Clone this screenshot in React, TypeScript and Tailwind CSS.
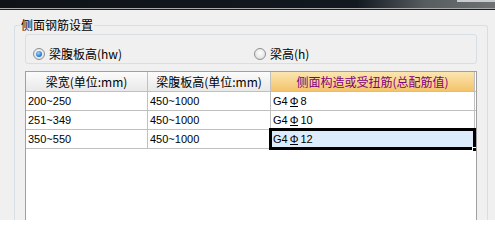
import React from "react";

type Row = { width: string; web: string; bar: number };

const rows: Row[] = [
  { width: "200~250", web: "450~1000", bar: 8 },
  { width: "251~349", web: "450~1000", bar: 10 },
  { width: "350~550", web: "450~1000", bar: 12 },
];

const cjk = { fontFamily: '"Noto Sans CJK SC", "Noto Sans", sans-serif' };
const latin = { fontFamily: '"Liberation Sans", Arial, sans-serif' };

const Radio = ({ checked, label }: { checked?: boolean; label: string }) => (
  <label className="flex items-center gap-[4px] h-[12px]">
    <span className="w-[12px] h-[12px] rounded-full border border-[#8e8f8f] bg-[radial-gradient(circle_at_50%_40%,#ffffff,#d8d8d8)] flex items-center justify-center">
      {checked && (
        <span className="w-[6px] h-[6px] rounded-full bg-[radial-gradient(circle_at_40%_35%,#9fd6ff,#1c6fd0_70%,#0d4e9e)]" />
      )}
    </span>
    <span className="text-[12px] leading-[14px] text-black" style={cjk}>
      {label}
    </span>
  </label>
);

const BarSymbol = () => (
  <span className="inline-block border-b border-black leading-[10px] mx-[2px]" style={latin}>
    Φ
  </span>
);

export default function App() {
  return (
    <div className="w-[495px] h-[220px] overflow-hidden bg-[#f0f0f0]">
      <div className="h-[8px] flex bg-[linear-gradient(to_right,#0f1317_0%,#121820_72%,#585d60_86%,#6e7274_100%)]">
        <div className="ml-auto w-[38px] h-[2px] bg-[#c9cbcc]" />
      </div>
      <div className="h-[1px] bg-[#a9abac]" />
      <div className="h-[1px] bg-[#1c1c1c]" />

      <div className="pl-[14px] pt-[15px]">
        <div className="relative w-[474px] h-[195px] border border-b-0 border-[#d5dfe5] rounded-t-[3px] px-[10px] pt-[8px]">
          <span
            className="absolute left-[5px] top-[-8px] px-[1px] bg-[#f0f0f0] text-[12px] leading-[14px] text-black"
            style={cjk}
          >
            侧面钢筋设置
          </span>

          <div className="h-[30px] border border-[#d5dfe5] rounded-[3px] pl-[7px] pt-[13px] grid grid-cols-[221px_1fr]">
            <Radio checked label="梁腹板高(hw)" />
            <Radio label="梁高(h)" />
          </div>

          <div className="mt-[7px] h-[149px] border border-b-0 border-[#a0a0a0] bg-white">
            <div className="flex h-[20px] border-b border-[#c0c0c0] text-[12px] leading-[19px]" style={cjk}>
              <div className="w-[122px] border-r border-[#c0c0c0] text-center bg-[linear-gradient(#fbfbfb,#e9e9e9)] text-black">
                梁宽(单位:mm)
              </div>
              <div className="w-[123px] border-r border-[#c0c0c0] text-center bg-[linear-gradient(#fbfbfb,#e9e9e9)] text-black">
                梁腹板高(单位:mm)
              </div>
              <div className="w-[204px] border-r border-[#c0c0c0] text-center bg-[linear-gradient(#fbe6b0,#f4c36c)] text-[#80007f]">
                侧面构造或受扭筋(总配筋值)
              </div>
            </div>

            {rows.map((r, i) => {
              const selected = i === rows.length - 1;
              return (
                <div key={r.width} className="flex h-[19px] border-b border-[#c0c0c0] text-[11px] leading-[18px] text-black" style={latin}>
                  <div className="w-[122px] border-r border-[#c0c0c0] pl-[2px]">{r.width}</div>
                  <div className="w-[123px] border-r border-[#c0c0c0] pl-[2px]">{r.web}</div>
                  <div className={`relative w-[204px] border-r border-[#c0c0c0] pl-[2px] ${selected ? "bg-[#ddecfc]" : ""}`}>
                    G4<BarSymbol />{r.bar}
                    {selected && (
                      <>
                        <div className="absolute left-[-2px] top-[-2px] w-[207px] h-[22px] border-[3px] border-black" />
                        <div className="absolute right-[-2px] bottom-[-3px] w-[4px] h-[4px] bg-black border-t border-l border-white" />
                      </>
                    )}
                  </div>
                </div>
              );
            })}
          </div>
        </div>
      </div>
    </div>
  );
}
